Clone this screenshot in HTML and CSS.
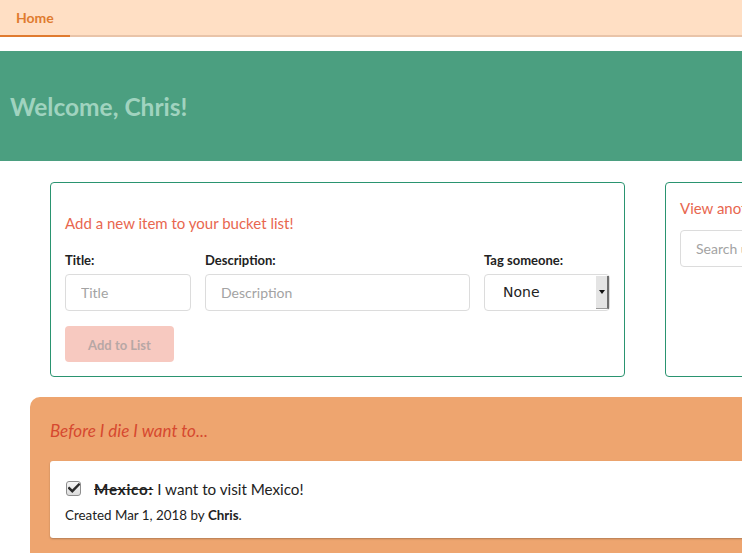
FILE: index.html
```html
<!DOCTYPE html>
<html lang="en">
<head>
<meta charset="utf-8">
<title>Bucket List</title>
<link rel="stylesheet" href="styles.css">
</head>
<body>
<nav class="nav">
  <a class="nav-item active" href="#">Home</a>
</nav>
<main class="page">
  <header class="banner">
    <h1 class="welcome">Welcome, Chris!</h1>
  </header>
  <section class="cards">
    <div class="card card-add">
      <h2 class="card-title">Add a new item to your bucket list!</h2>
      <div class="form-grid">
        <label class="field-label">Title:</label>
        <label class="field-label">Description:</label>
        <label class="field-label">Tag someone:</label>
        <input class="input" type="text" placeholder="Title">
        <input class="input" type="text" placeholder="Description">
        <div class="select">
          <span class="select-value">None</span>
          <span class="select-arrow"><svg width="6" height="4" viewBox="0 0 6 4"><path d="M0 0H6L3 4Z" fill="#111"/></svg></span>
        </div>
      </div>
      <button class="btn" type="button">Add to List</button>
    </div>
    <div class="card card-view">
      <h2 class="card-title">View another user's list</h2>
      <input class="input search" type="text" placeholder="Search users">
    </div>
  </section>
  <section class="list-panel">
    <h2 class="list-title">Before I die I want to...</h2>
    <div class="item">
      <div class="item-line">
        <span class="checkbox"><svg width="12" height="10" viewBox="0 0 12 10"><path d="M1.2 5.2L4.3 8.2L10.8 1.6" fill="none" stroke="#2b2b2b" stroke-width="2.4" stroke-linecap="square"/></svg></span>
        <span class="item-text"><strong class="done">Mexico:</strong> I want to visit Mexico!</span>
      </div>
      <p class="meta">Created Mar 1, 2018 by <strong>Chris</strong>.</p>
    </div>
  </section>
</main>
</body>
</html>
```
FILE: styles.css
```css
html, body {
  margin: 0;
  padding: 0;
  overflow: hidden;
}
body {
  font-family: Lato, "Open Sans", sans-serif;
  color: #222;
  background: #fff;
}
.nav {
  display: flex;
  height: 35px;
  background: #ffdfc4;
  border-bottom: 2px solid #e9c4a9;
}
.nav-item {
  display: flex;
  align-items: center;
  width: 70px;
  box-sizing: border-box;
  padding-left: 16px;
  margin-bottom: -2px;
  border-bottom: 2px solid #e07b2f;
  color: #e07b2f;
  font-weight: 700;
  font-size: 14px;
  text-decoration: none;
}
.page {
  width: 1200px;
  margin-top: 14px;
}
.banner {
  height: 110px;
  background: #4b9f80;
  display: flex;
  align-items: center;
  padding-left: 10px;
}
.welcome {
  margin: 0;
  font-size: 24.5px;
  font-weight: 700;
  color: #a0d3bf;
}
.cards {
  display: flex;
  gap: 40px;
  padding: 21px 0 0 50px;
}
.card {
  border: 1px solid #2a9470;
  border-radius: 4px;
  box-sizing: border-box;
  height: 195px;
  background: #fff;
}
.card-add {
  width: 575px;
  padding: 30px 14px 14px;
}
.card-view {
  width: 400px;
  padding: 15px 14px;
}
.card-title {
  margin: 0;
  font-size: 15px;
  line-height: 21px;
  font-weight: 400;
  color: #e8674f;
}
.form-grid {
  display: grid;
  grid-template-columns: 126px 1fr 126px;
  column-gap: 14px;
  row-gap: 5px;
  margin-top: 17px;
}
.field-label {
  font-size: 13px;
  line-height: 18px;
  font-weight: 700;
  color: #222;
}
.input {
  box-sizing: border-box;
  height: 37px;
  width: 100%;
  border: 1px solid #dcdcdc;
  border-radius: 4px;
  padding: 0 15px 1px;
  font-family: Lato, sans-serif;
  font-size: 14px;
  color: #333;
  outline: none;
}
.input::placeholder {
  color: #a3a3a3;
}
.search {
  margin-top: 11px;
}
.select {
  box-sizing: border-box;
  height: 37px;
  border: 1px solid #dcdcdc;
  border-radius: 4px;
  display: flex;
  align-items: center;
  padding-left: 18px;
  background: #fff;
}
.select-value {
  font-family: "DejaVu Sans", sans-serif;
  font-size: 14px;
  color: #222;
  flex: 1;
  padding-bottom: 1px;
}
.select-arrow {
  align-self: stretch;
  width: 11px;
  margin: 1px 0;
  background: #e4e4e4;
  border-right: 2px solid #6e6e6e;
  border-bottom: 1px solid #9a9a9a;
  display: flex;
  align-items: center;
  justify-content: center;
}
.btn {
  margin-top: 15px;
  width: 109px;
  height: 36px;
  padding-top: 2px;
  border: none;
  border-radius: 4px;
  background: #f7c9c0;
  color: #b7a7a5;
  font-family: Lato, sans-serif;
  font-weight: 700;
  font-size: 13px;
}
.list-panel {
  margin: 20px 0 0 30px;
  background: #eea56f;
  border-top-left-radius: 10px;
  padding: 23px 20px 40px;
}
.list-title {
  margin: 0 0 20px;
  font-size: 17px;
  line-height: 21px;
  font-style: italic;
  font-weight: 400;
  color: #d6492f;
}
.item {
  background: #fff;
  border-radius: 3px;
  box-shadow: 0 1px 2px rgba(0, 0, 0, 0.25);
  padding: 18px 15px 14px;
}
.item-line {
  display: flex;
  align-items: center;
  gap: 13px;
  font-size: 15.2px;
  line-height: 20px;
}
.checkbox {
  box-sizing: border-box;
  width: 15px;
  height: 15px;
  margin-left: 1px;
  margin-top: -2px;
  border: 1px solid #8e8e8e;
  border-radius: 3px;
  background: linear-gradient(#f6f6f6, #dcdcdc);
  display: flex;
  align-items: center;
  justify-content: center;
}
.done {
  text-decoration: line-through;
  letter-spacing: 0.8px;
}
.meta {
  margin: 7px 0 0;
  font-size: 13.4px;
  line-height: 18px;
}
```
